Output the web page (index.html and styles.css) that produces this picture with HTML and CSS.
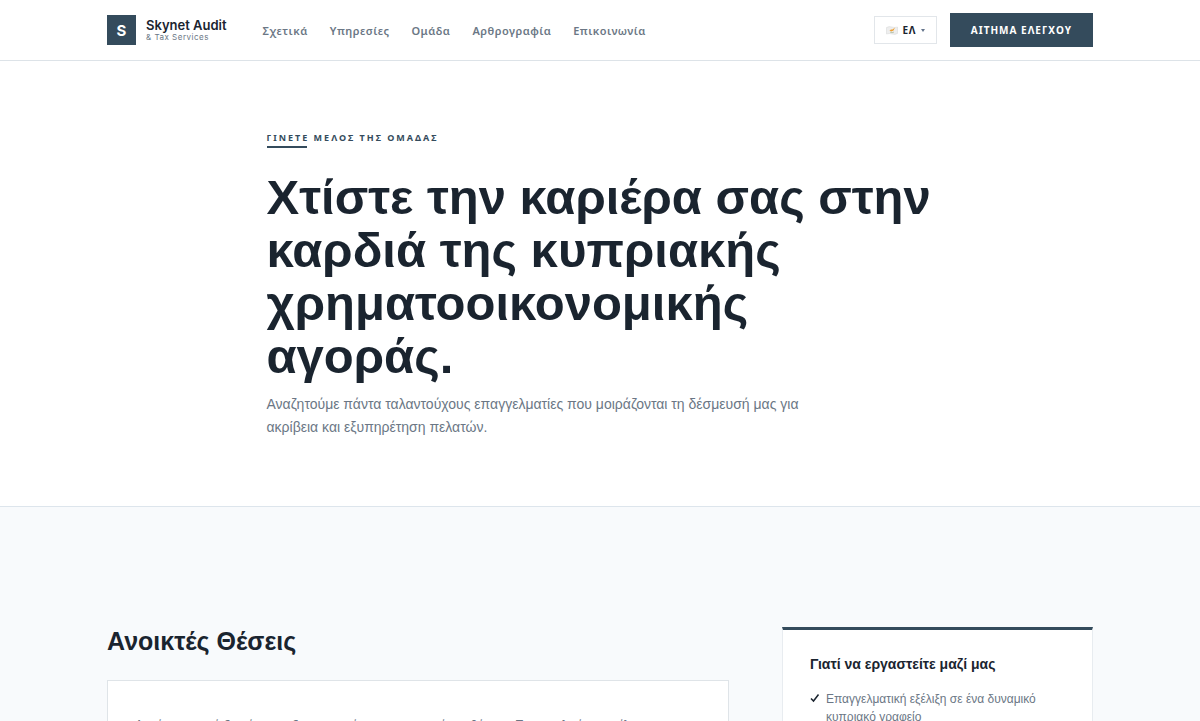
FILE: index.html
```html
<!DOCTYPE html>
<html lang="el">
<head>
    <meta charset="utf-8">
    <meta name="viewport" content="width=device-width, initial-scale=1.0">
    <title>Καριέρα | Skynet Audit &amp; Tax Services</title>
    <link rel="stylesheet" href="styles.css">
</head>
<body>
    <header class="site-header">
        <div class="container header-inner">
            <a href="#" class="brand">
                <span class="brand-mark">S</span>
                <span class="brand-text">
                    <span class="brand-name">Skynet Audit</span>
                    <span class="brand-sub">&amp; Tax Services</span>
                </span>
            </a>
            <nav class="main-nav">
                <a href="#">Σχετικά</a>
                <a href="#">Υπηρεσίες</a>
                <a href="#">Ομάδα</a>
                <a href="#">Αρθρογραφία</a>
                <a href="#">Επικοινωνία</a>
            </nav>
            <div class="header-actions">
                <button type="button" class="lang-button">
                    <svg class="flag" viewBox="0 0 24 18" aria-hidden="true">
                        <path d="M1 3 Q6 0 12 2 T23 2 V15 Q18 18 12 16 T1 16 Z" fill="#eeeeee" stroke="#d4d7d7"/>
                        <path d="M7 9 L10 7 L13 7 L18 3 L15 9 L11 11 Z" fill="#f0a030"/>
                        <path d="M8 12 Q12 15 16 12" fill="none" stroke="#a9b596" stroke-width="1.5"/>
                    </svg>
                    <span>ΕΛ</span>
                    <svg class="caret" viewBox="0 0 4 3" aria-hidden="true"><path d="M0 0h4L2 3z" fill="#64748b"/></svg>
                </button>
                <a href="#" class="cta">ΑΙΤΗΜΑ ΕΛΕΓΧΟΥ</a>
            </div>
        </div>
    </header>

    <section class="hero">
        <div class="hero-inner">
            <p class="eyebrow">ΓΙΝΕΤΕ ΜΕΛΟΣ ΤΗΣ ΟΜΑΔΑΣ</p>
            <h1>Χτίστε την καριέρα σας στην καρδιά της κυπριακής χρηματοοικονομικής αγοράς.</h1>
            <p class="lead">Αναζητούμε πάντα ταλαντούχους επαγγελματίες που μοιράζονται τη δέσμευσή μας για ακρίβεια και εξυπηρέτηση πελατών.</p>
        </div>
    </section>

    <main class="careers">
        <div class="container careers-grid">
            <section>
                <h2>Ανοικτές Θέσεις</h2>
                <div class="empty-card">
                    <p>Αυτή τη στιγμή δεν έχουμε δημοσιευμένες συγκεκριμένες θέσεις. Παρακαλούμε στείλτε μας το βιογραφικό σας.</p>
                </div>
            </section>
            <aside class="why-card">
                <h3>Γιατί να εργαστείτε μαζί μας</h3>
                <ul>
                    <li>
                        <svg class="check" viewBox="0 0 10 10" aria-hidden="true"><path d="M1 5.5 L3.5 8 L8.5 1.5" fill="none" stroke="#1a242f" stroke-width="1.5"/></svg>
                        <span>Επαγγελματική εξέλιξη σε ένα δυναμικό κυπριακό γραφείο</span>
                    </li>
                </ul>
            </aside>
        </div>
    </main>
</body>
</html>
```
FILE: styles.css
```css
* {
    box-sizing: border-box;
}
body {
    margin: 0;
    font-family: "Liberation Sans", Arial, sans-serif;
    color: #1a242f;
    background: #fff;
}
h1, h2, h3, p, ul {
    margin: 0;
    padding: 0;
}
a {
    color: inherit;
    text-decoration: none;
}
.container {
    max-width: 1040px;
    margin: 0 auto;
    padding: 0 27px;
}

/* header */
.site-header {
    border-bottom: 1px solid #dde3e8;
}
.header-inner {
    display: flex;
    align-items: center;
    height: 60px;
}
.brand {
    display: flex;
    align-items: center;
    gap: 10px;
    font-family: Inter, sans-serif;
}
.brand-mark {
    display: flex;
    align-items: center;
    justify-content: center;
    width: 29px;
    height: 30px;
    background: #344b5c;
    color: #fff;
    font-size: 15px;
    font-weight: 700;
}
.brand-text {
    display: flex;
    flex-direction: column;
}
.brand-name {
    font-size: 13px;
    font-weight: 600;
    line-height: 13px;
}
.brand-sub {
    font-size: 8px;
    line-height: 10px;
    letter-spacing: 0.5px;
    color: #6b7785;
}
.main-nav {
    display: flex;
    gap: 22px;
    margin-left: 36px;
    font-family: "Noto Sans", sans-serif;
    font-size: 11px;
    font-weight: 600;
    letter-spacing: 0.5px;
    color: #6b7785;
}
.header-actions {
    display: flex;
    align-items: center;
    gap: 13px;
    margin-left: auto;
}
.lang-button {
    display: flex;
    align-items: center;
    gap: 5px;
    height: 28px;
    padding: 0 11px;
    border: 1px solid #e2e6ea;
    background: #fff;
    color: #1a242f;
    font-family: "Noto Sans", sans-serif;
    font-size: 10px;
    font-weight: 700;
    letter-spacing: 0.5px;
}
.flag {
    width: 12px;
    height: 9px;
}
.caret {
    width: 4px;
    height: 3px;
}
.cta {
    padding: 0 21px;
    background: #344b5c;
    color: #fff;
    font-family: "Noto Sans", sans-serif;
    font-size: 10px;
    font-weight: 700;
    line-height: 34px;
    letter-spacing: 1px;
}

/* hero */
.hero {
    padding: 70px 27px 67px;
    border-bottom: 1px solid #dde5ec;
}
.hero-inner {
    max-width: 667px;
    margin: 0 auto;
}
.eyebrow {
    font-family: "Noto Sans", sans-serif;
    font-size: 9px;
    font-weight: 700;
    line-height: 14px;
    letter-spacing: 2px;
    color: #344b5c;
}
.eyebrow::after {
    content: "";
    display: block;
    width: 40px;
    height: 2px;
    margin-top: 1px;
    background: #344b5c;
}
h1 {
    margin-top: 23px;
    font-size: 49px;
    font-weight: 700;
    line-height: 53px;
}
.lead {
    max-width: 560px;
    margin-top: 10px;
    font-size: 14px;
    line-height: 23px;
    color: #6b7785;
}

/* careers */
.careers {
    padding: 120px 0;
    background: #f8fafc;
}
.careers-grid {
    display: grid;
    grid-template-columns: 2fr 1fr;
    gap: 53px;
    align-items: start;
}
h2 {
    font-size: 25px;
    font-weight: 700;
    line-height: 29px;
}
.empty-card {
    margin-top: 24px;
    padding: 33px 27px;
    border: 1px solid #dfe4e8;
    background: #fff;
    font-family: Inter, sans-serif;
    font-size: 12px;
    line-height: 21px;
    color: #6b7785;
}
.why-card {
    padding: 25px 27px;
    border: 1px solid #e8ecf0;
    border-top: 3px solid #344b5c;
    background: #fff;
}
h3 {
    font-size: 14px;
    font-weight: 700;
    line-height: 19px;
}
.why-card ul {
    margin-top: 16px;
    list-style: none;
}
.why-card li {
    display: flex;
    gap: 6px;
    font-size: 12px;
    line-height: 18px;
    color: #6b7785;
}
.check {
    flex: none;
    width: 10px;
    height: 10px;
    margin-top: 3px;
}
```
